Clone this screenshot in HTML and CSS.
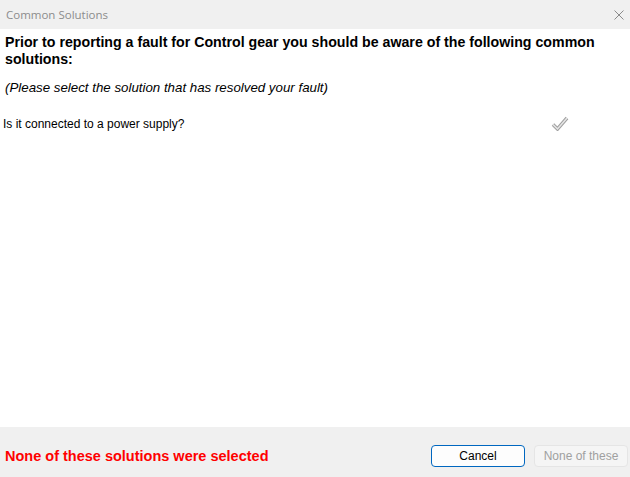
FILE: index.html
```html
<!DOCTYPE html>
<html lang="en">
<head>
    <meta charset="UTF-8">
    <title>Common Solutions</title>
    <link rel="stylesheet" href="styles.css">
</head>
<body>
    <div class="window">
        <div class="title-bar">
            <span class="title">Common Solutions</span>
            <button class="close-button" aria-label="Close">
                <svg width="10" height="10" viewBox="0 0 10 10">
                    <path d="M0.5 0.5 L9.5 9.5 M9.5 0.5 L0.5 9.5" stroke="#8a8a8a" stroke-width="1" fill="none"/>
                </svg>
            </button>
        </div>

        <div class="content">
            <h1 class="heading">Prior to reporting a fault for Control gear you should be aware of the following common solutions:</h1>
            <p class="hint">(Please select the solution that has resolved your fault)</p>

            <div class="solutions">
                <div class="solution">
                    <span class="solution-text">Is it connected to a power supply?</span>
                    <span class="solution-check">
                        <svg width="18" height="16" viewBox="0 0 18 16">
                            <path d="M2 9.5 L6.5 14 L16 3" stroke="#a0a0a0" stroke-width="3.5" fill="none"/>
                            <path d="M2 9.5 L6.5 14 L16 3" stroke="#e6e6e6" stroke-width="1.5" fill="none"/>
                        </svg>
                    </span>
                </div>
            </div>
        </div>

        <div class="footer">
            <span class="status">None of these solutions were selected</span>
            <div class="buttons">
                <button class="btn btn-primary">Cancel</button>
                <button class="btn btn-disabled" disabled>None of these</button>
            </div>
        </div>
    </div>
</body>
</html>
```

FILE: styles.css
```css
:root {
    --chrome-color: #f0f0f0;
    --title-color: #8c8c8c;
    --text-color: #000;
    --accent-color: #0067c0;
    --error-color: #ff0000;
}

html, body {
    margin: 0;
    height: 100%;
}

body {
    font-family: 'Liberation Sans', Arial, sans-serif;
    color: var(--text-color);
    background-color: #fff;
}

.window {
    display: flex;
    flex-direction: column;
    height: 100%;
}

.title-bar {
    height: 29px;
    flex-shrink: 0;
    display: flex;
    align-items: center;
    justify-content: space-between;
    background-color: var(--chrome-color);
    padding-left: 6px;
}

.title {
    font-family: 'Open Sans', 'Noto Sans', sans-serif;
    font-size: 11.5px;
    color: var(--title-color);
}

.close-button {
    width: 22px;
    height: 29px;
    border: none;
    background: none;
    padding: 0;
    display: flex;
    align-items: center;
    justify-content: center;
}

.content {
    flex: 1;
    padding: 5px 4px 0 5px;
}

.heading {
    margin: 0;
    font-size: 14.2px;
    font-weight: bold;
    line-height: 17px;
    padding-right: 20px;
}

.hint {
    margin: 12px 0 0;
    font-size: 13.3px;
    font-style: italic;
    line-height: 16px;
}

.solutions {
    margin-top: 18px;
}

.solution {
    display: flex;
    align-items: center;
    justify-content: space-between;
    margin-left: -2px;
    height: 20px;
}

.solution-text {
    font-size: 12px;
}

.solution-check {
    display: flex;
    margin-right: 57px;
    margin-top: -2px;
}

.footer {
    height: 50px;
    flex-shrink: 0;
    display: flex;
    align-items: flex-start;
    justify-content: space-between;
    background-color: var(--chrome-color);
    padding: 18px 2px 0 5px;
    box-sizing: border-box;
}

.status {
    font-size: 14.5px;
    font-weight: bold;
    color: var(--error-color);
    margin-top: 3px;
}

.buttons {
    display: flex;
    gap: 9px;
}

.btn {
    width: 94px;
    height: 22px;
    font-family: 'Liberation Sans', Arial, sans-serif;
    font-size: 12px;
    border-radius: 4px;
    padding: 0;
}

.btn-primary {
    background-color: #fdfdfd;
    border: 1px solid var(--accent-color);
    color: #000;
}

.btn-disabled {
    background-color: #f5f5f5;
    border: 1px solid #e5e5e5;
    color: #a0a0a0;
}
```
